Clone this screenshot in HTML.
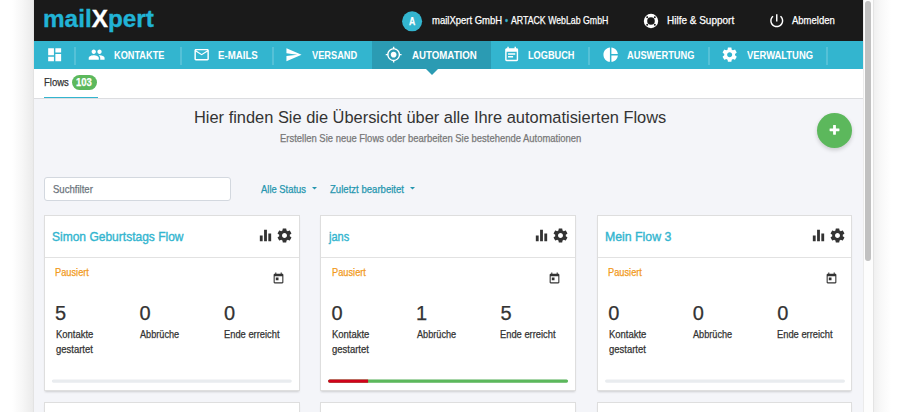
<!DOCTYPE html>
<html lang="de"><head><meta charset="utf-8"><title>mailXpert – Flows</title>
<style>
*{box-sizing:border-box;margin:0;padding:0}
html,body{width:908px;height:412px;overflow:hidden;background:#fff}
body{position:relative;font-family:"Liberation Sans",sans-serif;color:#333}
.t{position:absolute;white-space:nowrap;line-height:1;transform-origin:0 50%;font-style:normal;font-weight:normal;display:block}
h1.t,h2.t,p.t{font-weight:normal}
.t{-webkit-text-stroke:.25px currentColor}
h2.t{-webkit-text-stroke:.4px currentColor}
nav .t,h1.t{-webkit-text-stroke:0}
.logo .t{-webkit-text-stroke:.35px currentColor}
.ico{position:absolute;display:block}
.edge-l{position:absolute;left:12px;top:0;width:22px;height:412px;background:linear-gradient(to right,#fff,#f6f6f6 50%,#ebebeb 95%,#dcdcdc)}
.page{position:absolute;left:34px;top:0;width:828.5px;height:412px;background:#f4f5f9;overflow:hidden}
header.top{position:absolute;left:0;top:0;width:100%;height:41px;background:#1a1a1a}
.dot{color:#33b5cf;font-style:normal}
nav.main{position:absolute;left:0;top:41px;width:100%;height:28px;background:#33b5cf}
nav .active{position:absolute;top:0;height:100%;background:#2b9bb3}
nav .sep{position:absolute;top:6px;width:2px;height:18px;background:rgba(255,255,255,.17)}
.tabs{position:absolute;left:0;top:69px;width:100%;height:30px;background:#fff;border-bottom:1px solid #dcdde0}
.tabs .tri{position:absolute;left:391.7px;top:0;width:0;height:0;border-left:6px solid transparent;border-right:6px solid transparent;border-top:6px solid #2b9bb3}
.badge{position:absolute;left:37.8px;top:5.8px;width:25.5px;height:15px;border-radius:8px;background:#5cb85c}
.tabs .ul{position:absolute;left:10px;top:27.5px;width:54px;height:1.6px;background:#33b5cf}
main{position:absolute;left:0;top:0;width:100%;height:412px}
.fab{position:absolute;left:783px;top:113px;width:35px;height:35px;border-radius:50%;background:#5cb85c;border:0;box-shadow:0 2px 4px rgba(0,0,0,.18)}
.search{position:absolute;left:10.2px;top:176.7px;width:186.6px;height:24.6px;background:#fff;border:1px solid #d3d8df;border-radius:3px}
.caret{top:187px;width:5px;height:3px;fill:#2596af}
.card{position:absolute;top:215px;width:255px;height:176px;background:#fff;border:1px solid #dedede;box-shadow:0 2px 2px -1px rgba(0,0,0,.16)}
.card.next{top:402px}
.card-h{position:absolute;left:0;top:0;width:100%;height:42px;border-bottom:1px solid #e2e2e2}
.card-b{position:absolute;left:0;top:0;width:100%;height:100%}
.card .t,.card .ico{margin:-1px 0 0 -1px}
.bar{margin:0}
.sb{position:absolute;left:862.5px;top:0;width:11.5px;height:412px;background:#fdfdfd;border-left:1px solid #ebebeb;border-right:1px solid #e4e4e4}
.sb i{position:absolute;left:1.6px;top:1px;width:6px;height:260px;border-radius:3px;background:#c1c1c1}
.edge-r{position:absolute;left:874px;top:0;width:17px;height:412px;background:linear-gradient(to right,#f0f0f0,#f8f8f8 40%,#fff)}
</style></head>
<body>
<div class="edge-l"></div>
<div class="page">
<header class="top">
<a class="logo"><span class="t" style="left:9.00px;top:6.50px;font-size:24px;color:#21b3d6;font-weight:bold;transform:scaleX(1.013);">mail<span style="color:#fff">X</span>pert</span></a>
<svg class="ico avatar" style="left:367px;top:10px;width:22px;height:22px" viewBox="0 0 22 22" aria-hidden="true"><circle cx="11.1" cy="11.3" r="10.05" fill="#33b5cf"/></svg>
<span class="t" style="left:375.10px;top:16.80px;font-size:10px;color:#fff;font-weight:bold;transform:scaleX(0.867);">A</span>
<div class="account">
<span class="t" style="left:397.80px;top:15.40px;font-size:10.5px;color:#fff;transform:scaleX(0.903);">mailXpert GmbH</span>
<span class="t" style="left:471.40px;top:15.40px;font-size:10.5px;color:#33b5cf;transform:scaleX(0.843);">•</span>
<span class="t" style="left:477.20px;top:15.40px;font-size:10.5px;color:#fff;transform:scaleX(0.834);">ARTACK WebLab GmbH</span>
</div>
<svg class="ico" style="left:609px;top:12.9px;width:16px;height:16px" viewBox="0 0 16 16" aria-hidden="true"><circle cx="8" cy="8" r="5.5" fill="none" stroke="#fff" stroke-width="3.4"/><g fill="#1a1a1a"><circle cx="4.2" cy="4.2" r="1"/><circle cx="11.8" cy="4.2" r="1"/><circle cx="4.2" cy="11.8" r="1"/><circle cx="11.8" cy="11.8" r="1"/></g></svg>
<span class="t" style="left:632.80px;top:15.40px;font-size:10.5px;color:#fff;transform:scaleX(0.951);">Hilfe &amp; Support</span>
<svg class="ico" style="left:733.8px;top:11.7px;width:17.5px;height:17.5px" viewBox="0 0 24 24" fill="#fff" aria-hidden="true"><path d="M13 3h-2v10h2V3zm4.83 2.17l-1.42 1.42C17.99 7.86 19 9.81 19 12c0 3.87-3.13 7-7 7s-7-3.13-7-7c0-2.19 1.01-4.14 2.58-5.42L6.17 5.17C4.23 6.82 3 9.26 3 12c0 4.970 4.03 9 9 9s9-4.03 9-9c0-2.74-1.23-5.18-3.17-6.83z"/></svg>
<span class="t" style="left:757.80px;top:15.40px;font-size:10.5px;color:#fff;transform:scaleX(0.904);">Abmelden</span>
</header>
<nav class="main">
<div class="active" style="left:338px;width:119.4px"></div>
<i class="sep" style="left:40px"></i>
<i class="sep" style="left:146px"></i>
<i class="sep" style="left:238px"></i>
<i class="sep" style="left:554px"></i>
<i class="sep" style="left:674px"></i>
<i class="sep" style="left:792px"></i>
<a class="ni"><svg class="ico" style="left:11.7px;top:5.2px;width:17.3px;height:17.3px" viewBox="0 0 24 24" fill="#fff" aria-hidden="true"><path d="M3 13h8V3H3v10zm0 8h8v-6H3v6zm10 0h8V11h-8v10zm0-18v6h8V3h-8z"/></svg>
</a>
<a class="ni"><svg class="ico" style="left:54.2px;top:5.2px;width:17.3px;height:17.3px" viewBox="0 0 24 24" fill="#fff" aria-hidden="true"><path d="M16 11c1.66 0 2.99-1.34 2.99-3S17.66 5 16 5c-1.66 0-3 1.34-3 3s1.34 3 3 3zm-8 0c1.66 0 2.99-1.34 2.99-3S9.66 5 8 5C6.34 5 5 6.34 5 8s1.34 3 3 3zm0 2c-2.33 0-7 1.17-7 3.5V19h14v-2.5c0-2.33-4.67-3.5-7-3.5zm8 0c-.29 0-.62.02-.97.05 1.16.84 1.97 1.97 1.97 3.45V19h6v-2.5c0-2.33-4.67-3.5-7-3.5z"/></svg>
<span class="t" style="left:79.90px;top:8.60px;font-size:11px;color:#fff;font-weight:bold;transform:scaleX(0.836);">KONTAKTE</span>
</a>
<a class="ni"><svg class="ico" style="left:158.5px;top:5.2px;width:17.3px;height:17.3px" viewBox="0 0 24 24" fill="#fff" aria-hidden="true"><path d="M20 4H4c-1.1 0-1.99.9-1.99 2L2 18c0 1.1.9 2 2 2h16c1.1 0 2-.9 2-2V6c0-1.1-.9-2-2-2zm0 14H4V8l8 5 8-5v10zm-8-7L4 6h16l-8 5z"/></svg>
<span class="t" style="left:183.90px;top:8.60px;font-size:11px;color:#fff;font-weight:bold;transform:scaleX(0.881);">E-MAILS</span>
</a>
<a class="ni"><svg class="ico" style="left:251.3px;top:5.2px;width:17.3px;height:17.3px" viewBox="0 0 24 24" fill="#fff" aria-hidden="true"><path d="M2.01 21L23 12 2.01 3 2 10l15 2-15 2z"/></svg>
<span class="t" style="left:278.20px;top:8.60px;font-size:11px;color:#fff;font-weight:bold;transform:scaleX(0.841);">VERSAND</span>
</a>
<a class="ni"><svg class="ico" style="left:351.2px;top:5.2px;width:17.3px;height:17.3px" viewBox="0 0 24 24" fill="#fff" aria-hidden="true"><path d="M12 8c-2.21 0-4 1.79-4 4s1.79 4 4 4 4-1.79 4-4-1.79-4-4-4zm8.94 3c-.46-4.17-3.77-7.48-7.94-7.94V1h-2v2.06C6.83 3.52 3.52 6.83 3.06 11H1v2h2.06c.46 4.17 3.77 7.48 7.94 7.94V23h2v-2.06c4.17-.46 7.48-3.77 7.94-7.94H23v-2h-2.06zM12 19c-3.87 0-7-3.13-7-7s3.13-7 7-7 7 3.13 7 7-3.13 7-7 7z"/></svg>
<span class="t" style="left:378.00px;top:8.60px;font-size:11px;color:#fff;font-weight:bold;transform:scaleX(0.881);">AUTOMATION</span>
</a>
<a class="ni"><svg class="ico" style="left:469.3px;top:5.2px;width:17.3px;height:17.3px" viewBox="0 0 24 24" fill="#fff" aria-hidden="true"><path d="M17 10H7v2h10v-2zm2-7h-1V1h-2v2H8V1H6v2H5c-1.11 0-1.99.9-1.99 2L3 19c0 1.1.89 2 2 2h14c1.1 0 2-.9 2-2V5c0-1.1-.9-2-2-2zm0 16H5V8h14v11zm-5-5H7v2h7v-2z"/></svg>
<span class="t" style="left:493.60px;top:8.60px;font-size:11px;color:#fff;font-weight:bold;transform:scaleX(0.836);">LOGBUCH</span>
</a>
<a class="ni"><svg class="ico" style="left:567.6px;top:5.2px;width:17.3px;height:17.3px" viewBox="0 0 24 24" fill="#fff" aria-hidden="true"><path d="M11 2v20c-5.07-.5-9-4.79-9-10s3.93-9.5 9-10zm2.03 0v8.99H22c-.47-4.74-4.24-8.52-8.97-8.99zm0 11.01V22c4.74-.47 8.5-4.25 8.97-8.99h-8.97z"/></svg>
<span class="t" style="left:593.30px;top:8.60px;font-size:11px;color:#fff;font-weight:bold;transform:scaleX(0.842);">AUSWERTUNG</span>
</a>
<a class="ni"><svg class="ico" style="left:687px;top:5.2px;width:17.3px;height:17.3px" viewBox="0 0 24 24" fill="#fff" aria-hidden="true"><path d="M19.43 12.98c.04-.32.07-.64.07-.98s-.03-.66-.07-.98l2.11-1.65c.19-.15.24-.42.12-.64l-2-3.46c-.12-.22-.39-.3-.61-.22l-2.49 1c-.52-.4-1.08-.73-1.69-.98l-.38-2.65C14.46 2.18 14.25 2 14 2h-4c-.25 0-.46.18-.49.42l-.38 2.65c-.61.25-1.17.59-1.69.98l-2.49-1c-.23-.09-.49 0-.61.22l-2 3.46c-.13.22-.07.49.12.64l2.11 1.65c-.04.32-.07.65-.07.98s.03.66.07.98l-2.11 1.65c-.19.15-.24.42-.12.64l2 3.46c.12.22.39.3.61.22l2.49-1c.52.4 1.08.73 1.69.98l.38 2.65c.03.24.24.42.49.42h4c.25 0 .46-.18.49-.42l.38-2.65c.61-.25 1.17-.59 1.69-.98l2.49 1c.23.09.49 0 .61-.22l2-3.46c.12-.22.07-.49-.12-.64l-2.11-1.65zM12 15.5c-1.93 0-3.5-1.57-3.5-3.5s1.57-3.5 3.5-3.5 3.5 1.57 3.5 3.5-1.57 3.5-3.5 3.5z"/></svg>
<span class="t" style="left:713.00px;top:8.60px;font-size:11px;color:#fff;font-weight:bold;transform:scaleX(0.855);">VERWALTUNG</span>
</a>
</nav>
<div class="tabs"><i class="tri"></i>
<span class="t" style="left:9.70px;top:7.80px;font-size:11px;color:#333;transform:scaleX(0.866);">Flows</span>
<b class="badge"></b>
<span class="t" style="left:41.70px;top:8.00px;font-size:11px;color:#fff;font-weight:bold;transform:scaleX(0.866);">103</span>
<i class="ul"></i></div>
<main>
<h1 class="t" style="left:160.20px;top:110.30px;font-size:16.7px;color:#333;transform:scaleX(0.983);">Hier finden Sie die Übersicht über alle Ihre automatisierten Flows</h1>
<p class="t" style="left:245.50px;top:134.00px;font-size:10.3px;color:#787878;transform:scaleX(0.917);">Erstellen Sie neue Flows oder bearbeiten Sie bestehende Automationen</p>
<button class="fab" aria-label="Neuer Flow"><svg class="ico" style="left:0;top:0;width:35px;height:35px" viewBox="0 0 35 35" fill="#fff" aria-hidden="true"><rect x="12.6" y="15.4" width="9.8" height="2.8" rx=".4"/><rect x="16.1" y="11.9" width="2.8" height="9.8" rx=".4"/></svg></button>
<div class="search"></div>
<span class="t" style="left:18.90px;top:184.90px;font-size:10.3px;color:#6c757d;transform:scaleX(0.928);">Suchfilter</span>
<span class="t" style="left:226.90px;top:184.90px;font-size:10.3px;color:#2596af;transform:scaleX(0.915);">Alle Status</span>
<svg class="ico caret" style="left:277.8px" viewBox="0 0 5 3" aria-hidden="true"><path d="M0 0h5L2.5 2.6z"/></svg>
<span class="t" style="left:295.90px;top:184.90px;font-size:10.3px;color:#2596af;transform:scaleX(0.930);">Zuletzt bearbeitet</span>
<svg class="ico caret" style="left:376.4px" viewBox="0 0 5 3" aria-hidden="true"><path d="M0 0h5L2.5 2.6z"/></svg>
<section class="card" style="left:10px;width:256px"><header class="card-h"><h2 class="t" style="left:8.20px;top:14.70px;font-size:13.5px;color:#33b5cf;transform:scaleX(0.890);">Simon Geburtstags Flow</h2><svg class="ico" style="left:213.1px;top:11.8px;width:17px;height:17px" viewBox="0 0 24 24" fill="#333" aria-hidden="true"><path d="M10 20h4V4h-4v16zm-6 0h4v-8H4v8zM16 9v11h4V9h-4z"/></svg><svg class="ico" style="left:232.0px;top:12px;width:17px;height:17px" viewBox="0 0 24 24" fill="#333" aria-hidden="true"><path d="M19.43 12.98c.04-.32.07-.64.07-.98s-.03-.66-.07-.98l2.11-1.65c.19-.15.24-.42.12-.64l-2-3.46c-.12-.22-.39-.3-.61-.22l-2.49 1c-.52-.4-1.08-.73-1.69-.98l-.38-2.65C14.46 2.18 14.25 2 14 2h-4c-.25 0-.46.18-.49.42l-.38 2.65c-.61.25-1.17.59-1.69.98l-2.49-1c-.23-.09-.49 0-.61.22l-2 3.46c-.13.22-.07.49.12.64l2.11 1.65c-.04.32-.07.65-.07.98s.03.66.07.98l-2.11 1.65c-.19.15-.24.42-.12.64l2 3.46c.12.22.39.3.61.22l2.49-1c.52.4 1.08.73 1.69.98l.38 2.65c.03.24.24.42.49.42h4c.25 0 .46-.18.49-.42l.38-2.65c.61-.25 1.17-.59 1.69-.98l2.49 1c.23.09.49 0 .61-.22l2-3.46c.12-.22.07-.49-.12-.64l-2.11-1.65zM12 15.5c-1.93 0-3.5-1.57-3.5-3.5s1.57-3.5 3.5-3.5 3.5 1.57 3.5 3.5-1.57 3.5-3.5 3.5z"/></svg></header><div class="card-b"><span class="t" style="left:10.90px;top:52.60px;font-size:10px;color:#f29a1c;transform:scaleX(0.925);">Pausiert</span><svg class="ico" style="left:228.1px;top:56.5px;width:13px;height:13px" viewBox="0 0 24 24" fill="#333" aria-hidden="true"><path d="M19 3h-1V1h-2v2H8V1H6v2H5c-1.11 0-1.99.9-1.99 2L3 19c0 1.1.89 2 2 2h14c1.1 0 2-.9 2-2V5c0-1.1-.9-2-2-2zm0 16H5V8h14v11zM7 10h5v5H7z"/></svg><div class="stat"><span class="t num" style="left:11.10px;top:88.40px;font-size:20px;color:#333;">5</span><span class="t" style="left:11.70px;top:113.20px;font-size:10px;color:#333;transform:scaleX(0.946);line-height:14.8px;">Kontakte<br>gestartet</span></div><div class="stat"><span class="t num" style="left:95.60px;top:88.40px;font-size:20px;color:#333;">0</span><span class="t" style="left:96.20px;top:115.20px;font-size:10px;color:#333;transform:scaleX(0.915);">Abbrüche</span></div><div class="stat"><span class="t num" style="left:180.10px;top:88.40px;font-size:20px;color:#333;">0</span><span class="t" style="left:179.70px;top:115.20px;font-size:10px;color:#333;transform:scaleX(0.934);">Ende erreicht</span></div><svg class="ico bar" style="left:7px;top:164px;width:242px;height:5px" viewBox="0 0 242 5" aria-hidden="true"><rect x="0.8" y="0.4" width="240" height="3.3" rx="1.65" fill="#e9ecef"/></svg></div></section>
<section class="card" style="left:286px;width:256px"><header class="card-h"><h2 class="t" style="left:8.50px;top:14.70px;font-size:13.5px;color:#33b5cf;transform:scaleX(0.816);">jans</h2><svg class="ico" style="left:213.4px;top:11.8px;width:17px;height:17px" viewBox="0 0 24 24" fill="#333" aria-hidden="true"><path d="M10 20h4V4h-4v16zm-6 0h4v-8H4v8zM16 9v11h4V9h-4z"/></svg><svg class="ico" style="left:232.3px;top:12px;width:17px;height:17px" viewBox="0 0 24 24" fill="#333" aria-hidden="true"><path d="M19.43 12.98c.04-.32.07-.64.07-.98s-.03-.66-.07-.98l2.11-1.65c.19-.15.24-.42.12-.64l-2-3.46c-.12-.22-.39-.3-.61-.22l-2.49 1c-.52-.4-1.08-.73-1.69-.98l-.38-2.65C14.46 2.18 14.25 2 14 2h-4c-.25 0-.46.18-.49.42l-.38 2.65c-.61.25-1.17.59-1.69.98l-2.49-1c-.23-.09-.49 0-.61.22l-2 3.46c-.13.22-.07.49.12.64l2.11 1.65c-.04.32-.07.65-.07.98s.03.66.07.98l-2.11 1.65c-.19.15-.24.42-.12.64l2 3.46c.12.22.39.3.61.22l2.49-1c.52.4 1.08.73 1.69.98l.38 2.65c.03.24.24.42.49.42h4c.25 0 .46-.18.49-.42l.38-2.65c.61-.25 1.17-.59 1.69-.98l2.49 1c.23.09.49 0 .61-.22l2-3.46c.12-.22.07-.49-.12-.64l-2.11-1.65zM12 15.5c-1.93 0-3.5-1.57-3.5-3.5s1.57-3.5 3.5-3.5 3.5 1.57 3.5 3.5-1.57 3.5-3.5 3.5z"/></svg></header><div class="card-b"><span class="t" style="left:12.20px;top:52.60px;font-size:10px;color:#f29a1c;transform:scaleX(0.925);">Pausiert</span><svg class="ico" style="left:228.4px;top:56.5px;width:13px;height:13px" viewBox="0 0 24 24" fill="#333" aria-hidden="true"><path d="M19 3h-1V1h-2v2H8V1H6v2H5c-1.11 0-1.99.9-1.99 2L3 19c0 1.1.89 2 2 2h14c1.1 0 2-.9 2-2V5c0-1.1-.9-2-2-2zm0 16H5V8h14v11zM7 10h5v5H7z"/></svg><div class="stat"><span class="t num" style="left:11.40px;top:88.40px;font-size:20px;color:#333;">0</span><span class="t" style="left:12.00px;top:113.20px;font-size:10px;color:#333;transform:scaleX(0.946);line-height:14.8px;">Kontakte<br>gestartet</span></div><div class="stat"><span class="t num" style="left:95.90px;top:88.40px;font-size:20px;color:#333;">1</span><span class="t" style="left:96.50px;top:115.20px;font-size:10px;color:#333;transform:scaleX(0.915);">Abbrüche</span></div><div class="stat"><span class="t num" style="left:180.40px;top:88.40px;font-size:20px;color:#333;">5</span><span class="t" style="left:180.00px;top:115.20px;font-size:10px;color:#333;transform:scaleX(0.934);">Ende erreicht</span></div><svg class="ico bar" style="left:7px;top:164px;width:242px;height:5px" viewBox="0 0 242 5" aria-hidden="true"><rect x="1.1" y="0.4" width="240" height="3.3" rx="1.65" fill="#e9ecef"/><rect x="1.1" y="0.4" width="240" height="3.3" rx="1.65" fill="#5cb85c"/><path d="M2.75 0.4H41.10V3.70H2.75A1.65 1.65 0 0 1 2.75 0.4z" fill="#d0021b"/></svg></div></section>
<section class="card" style="left:563px;width:255px"><header class="card-h"><h2 class="t" style="left:8.40px;top:14.70px;font-size:13.5px;color:#33b5cf;transform:scaleX(0.911);">Mein Flow 3</h2><svg class="ico" style="left:213.3px;top:11.8px;width:17px;height:17px" viewBox="0 0 24 24" fill="#333" aria-hidden="true"><path d="M10 20h4V4h-4v16zm-6 0h4v-8H4v8zM16 9v11h4V9h-4z"/></svg><svg class="ico" style="left:232.2px;top:12px;width:17px;height:17px" viewBox="0 0 24 24" fill="#333" aria-hidden="true"><path d="M19.43 12.98c.04-.32.07-.64.07-.98s-.03-.66-.07-.98l2.11-1.65c.19-.15.24-.42.12-.64l-2-3.46c-.12-.22-.39-.3-.61-.22l-2.49 1c-.52-.4-1.08-.73-1.69-.98l-.38-2.65C14.46 2.18 14.25 2 14 2h-4c-.25 0-.46.18-.49.42l-.38 2.65c-.61.25-1.17.59-1.69.98l-2.49-1c-.23-.09-.49 0-.61.22l-2 3.46c-.13.22-.07.49.12.64l2.11 1.65c-.04.32-.07.65-.07.98s.03.66.07.98l-2.11 1.65c-.19.15-.24.42-.12.64l2 3.46c.12.22.39.3.61.22l2.49-1c.52.4 1.08.73 1.69.98l.38 2.65c.03.24.24.42.49.42h4c.25 0 .46-.18.49-.42l.38-2.65c.61-.25 1.17-.59 1.69-.98l2.49 1c.23.09.49 0 .61-.22l2-3.46c.12-.22.07-.49-.12-.64l-2.11-1.65zM12 15.5c-1.93 0-3.5-1.57-3.5-3.5s1.57-3.5 3.5-3.5 3.5 1.57 3.5 3.5-1.57 3.5-3.5 3.5z"/></svg></header><div class="card-b"><span class="t" style="left:11.10px;top:52.60px;font-size:10px;color:#f29a1c;transform:scaleX(0.925);">Pausiert</span><svg class="ico" style="left:228.3px;top:56.5px;width:13px;height:13px" viewBox="0 0 24 24" fill="#333" aria-hidden="true"><path d="M19 3h-1V1h-2v2H8V1H6v2H5c-1.11 0-1.99.9-1.99 2L3 19c0 1.1.89 2 2 2h14c1.1 0 2-.9 2-2V5c0-1.1-.9-2-2-2zm0 16H5V8h14v11zM7 10h5v5H7z"/></svg><div class="stat"><span class="t num" style="left:11.30px;top:88.40px;font-size:20px;color:#333;">0</span><span class="t" style="left:11.90px;top:113.20px;font-size:10px;color:#333;transform:scaleX(0.946);line-height:14.8px;">Kontakte<br>gestartet</span></div><div class="stat"><span class="t num" style="left:95.80px;top:88.40px;font-size:20px;color:#333;">0</span><span class="t" style="left:96.40px;top:115.20px;font-size:10px;color:#333;transform:scaleX(0.915);">Abbrüche</span></div><div class="stat"><span class="t num" style="left:180.30px;top:88.40px;font-size:20px;color:#333;">0</span><span class="t" style="left:179.90px;top:115.20px;font-size:10px;color:#333;transform:scaleX(0.934);">Ende erreicht</span></div><svg class="ico bar" style="left:7px;top:164px;width:242px;height:5px" viewBox="0 0 242 5" aria-hidden="true"><rect x="1.0" y="0.4" width="240" height="3.3" rx="1.65" fill="#e9ecef"/></svg></div></section>
<section class="card next" style="left:10px;width:256px"></section>
<section class="card next" style="left:286px;width:256px"></section>
<section class="card next" style="left:563px;width:255px"></section>
</main>
</div>
<div class="sb"><i></i></div><div class="edge-r"></div>
</body></html>
